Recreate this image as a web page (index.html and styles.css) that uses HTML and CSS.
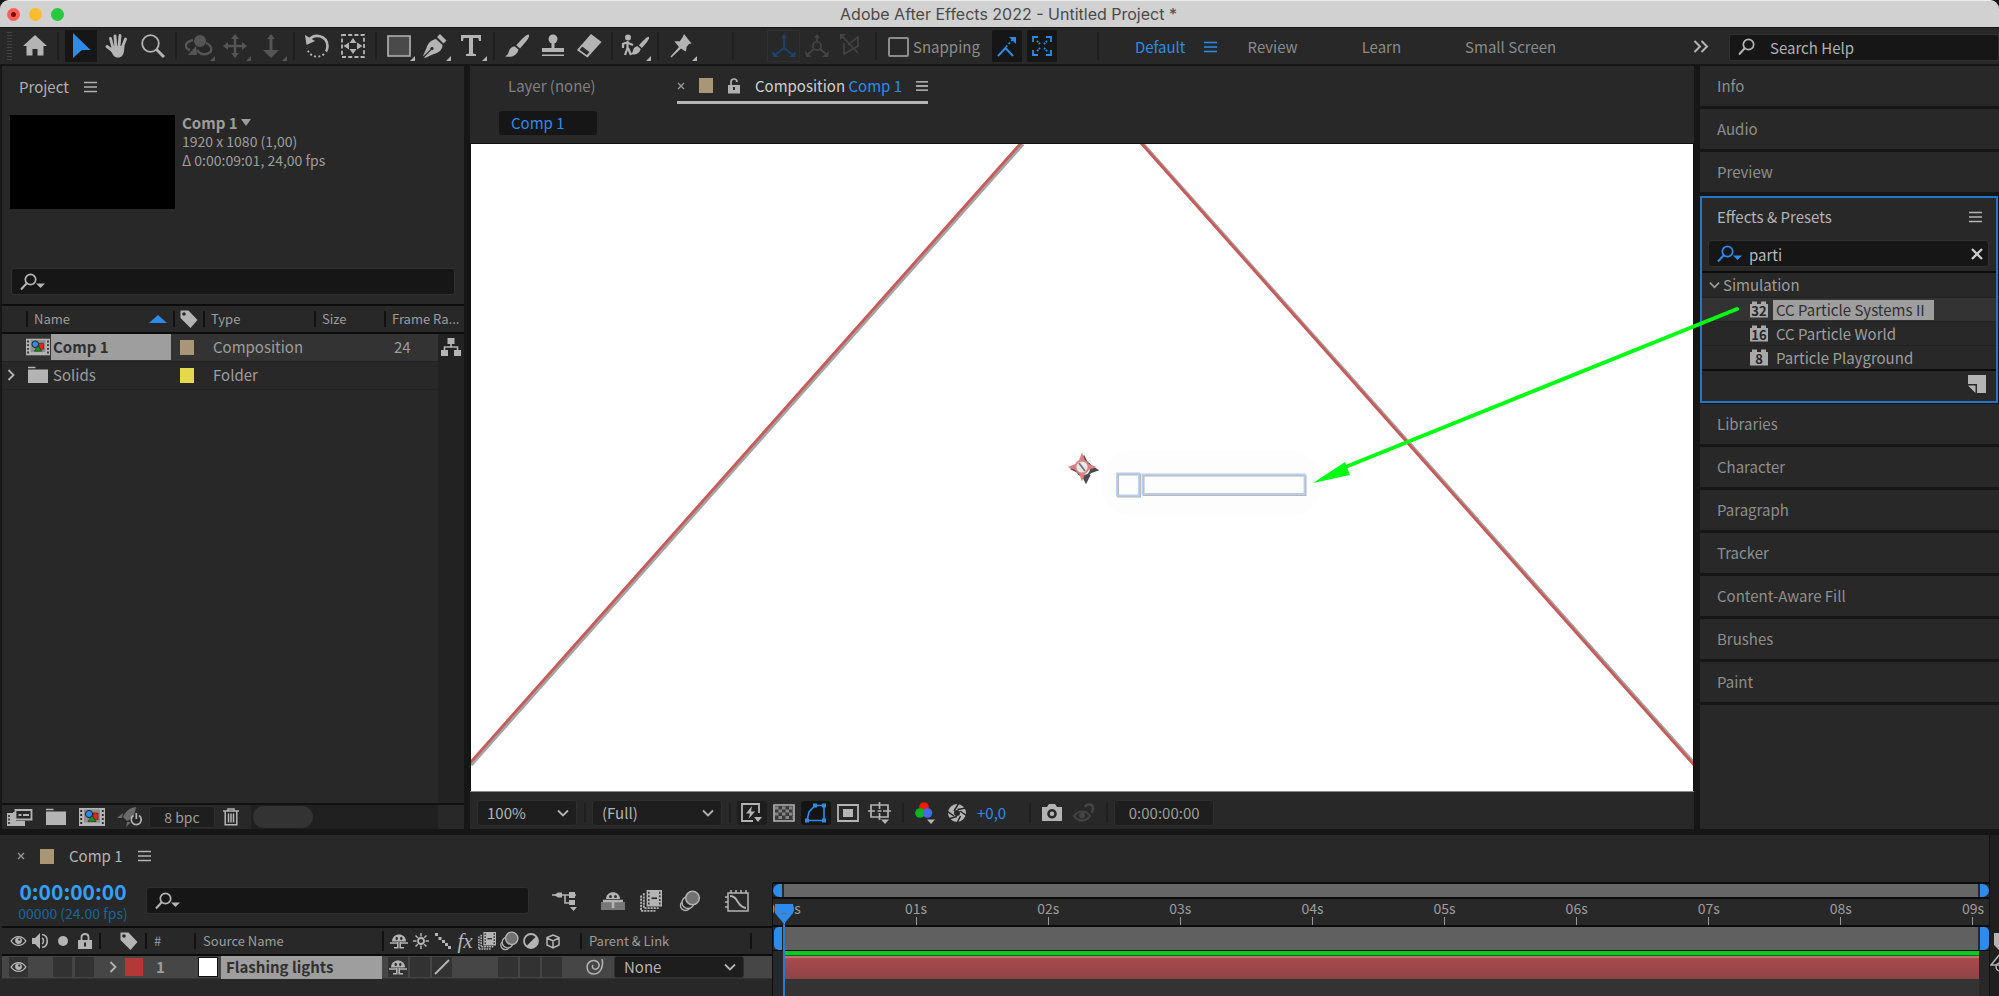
FILE: index.html
```html
<!DOCTYPE html>
<html lang="en">
<head>
<meta charset="utf-8">
<title>Adobe After Effects 2022 - Untitled Project *</title>
<link rel="stylesheet" href="styles.css">
</head>
<body>
<svg class="defs" width="0" height="0" aria-hidden="true">
  <symbol id="menu" viewBox="0 0 13 12"><path d="M0 1.500h13M0 6h13M0 10.500h13" stroke="currentColor" stroke-width="1.500"/></symbol>
  <symbol id="search" viewBox="0 0 26 18"><circle cx="10.500" cy="6.500" r="5.200" fill="none" stroke="currentColor" stroke-width="1.700"/><path d="M6.700 10.300L1 16.500" stroke="currentColor" stroke-width="2"/></symbol>
  <symbol id="search-drop" viewBox="0 0 26 18"><circle cx="10.500" cy="6.500" r="5.200" fill="none" stroke="currentColor" stroke-width="1.700"/><path d="M6.700 10.300L1 16.500" stroke="currentColor" stroke-width="2"/><path d="M16 10.500h9l-4.500 4.500z" fill="currentColor"/></symbol>
  <symbol id="chev" viewBox="0 0 12 8"><path d="M1 1.500l5 5 5-5" fill="none" stroke="currentColor" stroke-width="1.800"/></symbol>
  <symbol id="chev-r" viewBox="0 0 8 12"><path d="M1.500 1l5 5-5 5" fill="none" stroke="currentColor" stroke-width="1.800"/></symbol>
  <symbol id="corner" viewBox="0 0 5 5"><path d="M5 0v5H0z" fill="currentColor"/></symbol>
  <symbol id="tag" viewBox="0 0 20 20"><path fill-rule="evenodd" d="M1.500 1.500h8L18.500 11l-7 8L1.500 9zM5 3.200a1.800 1.800 0 100 3.600 1.800 1.800 0 000-3.600z" fill="currentColor"/></symbol>
  <symbol id="folder" viewBox="0 0 22 18"><path d="M1 1.500h7.500" stroke="currentColor" stroke-width="1.500"/><path d="M1 3.500h20V17H1z" fill="currentColor"/></symbol>
  <symbol id="comp" viewBox="0 0 26 20"><path d="M0 1h26v18H0z" fill="#b4b4b4"/><path d="M2.200 3v15M23.800 3v15" stroke="#262626" stroke-width="1.800" stroke-dasharray="2 2"/><path d="M5 2.500h16v13H5z" fill="#8e8e8e"/><circle cx="10" cy="7" r="3.600" fill="#2d8ceb" stroke="#202020"/><path d="M14 6h5v6.500h-5z" fill="#f32020" stroke="#202020" stroke-width=".6"/><path d="M13 8.500l4 6H9z" fill="#0d9a12" stroke="#202020" stroke-width=".6"/></symbol>
  <symbol id="eye" viewBox="0 0 18 14"><path d="M1.200 7C5 .8 13 .8 16.800 7 13 13.200 5 13.200 1.200 7z" fill="none" stroke="currentColor" stroke-width="1.500"/><circle cx="9" cy="6.500" r="3.600" fill="currentColor"/><circle cx="9.800" cy="5.500" r="1.200" fill="#262626"/></symbol>
  <symbol id="shy" viewBox="0 0 18 16"><path d="M2 8.500C2 -1 16 -1 16 8.500z" fill="currentColor"/><path d="M0 10h7.500M10.500 10H18M7.800 9v6.500M10.200 9v6.500M4 14.800h3.800M10.200 14.800H14" stroke="currentColor" stroke-width="1.600"/><ellipse cx="6.700" cy="5.500" rx="1.200" ry="1.800" fill="#303030"/><ellipse cx="11.300" cy="5.500" rx="1.200" ry="1.800" fill="#303030"/></symbol>
  <symbol id="blend" viewBox="0 0 20 20"><path d="M1 5v14h13M3.500 3v13.500H17" fill="none" stroke="currentColor" stroke-width="1.700" stroke-dasharray="2 .8"/><path d="M6 0h14v15H6z" fill="currentColor"/><path d="M8 1.500v12M18 1.500v12" stroke="#2b2b2b" stroke-width="1.300" stroke-dasharray="1.800 1.500"/><path d="M10.500 7.500h5" stroke="#2b2b2b" stroke-width="1.500"/></symbol>
  <symbol id="blur" viewBox="0 0 22 22"><circle cx="7" cy="15.500" r="5" fill="#262626" stroke="currentColor" stroke-width="1.400"/><circle cx="9.500" cy="12.500" r="6" fill="#262626" stroke="currentColor" stroke-width="1.400"/><circle cx="14" cy="8" r="6.800" fill="#727272" stroke="currentColor" stroke-width="1.500"/></symbol>
  <symbol id="brick" viewBox="0 0 18 16"><path d="M0 2.500h2V0h5v2.500h4V0h5v2.500h2V16H0z" fill="#a8a8a8"/></symbol>
  <symbol id="brush" viewBox="0 0 24 24"><path d="M24 .5c1 1-.5 3.500-3 7l-6 7-3.800-3.300 6-6.500C20.500 1.500 23 0 24 .5zM10 12.500l3.500 3.200c-1.500 6-7.500 8.300-13.500 6.500 3-1.200 3.500-3 4-5.200 1-3.300 3.500-4.800 6-4.500z" fill="currentColor"/></symbol>
</svg>

<header class="titlebar">
  <div class="lights"><span class="light red"></span><span class="light amber"></span><span class="light green"></span></div>
  <h1 class="window-title">Adobe After Effects 2022 - Untitled Project *</h1>
</header>

<nav class="toolbar" aria-label="Tools">
  <span class="grip"></span>
  <button class="tool" aria-label="Home"><svg width="24" height="24" viewBox="0 0 24 24"><path d="M12 1L24 12h-3.500v9.500h-6V15h-5v6.500h-6V12H0z" fill="currentColor"/></svg></button>
  <span class="sep"></span>
  <button class="tool on" aria-label="Selection"><svg width="20" height="26" viewBox="0 0 20 26"><path d="M2 0l17.500 17H11l-9 8z" fill="currentColor"/></svg></button>
  <button class="tool" aria-label="Hand"><svg width="24" height="24" viewBox="0 0 24 24"><path d="M8 14L5.500 4.500M10.700 12L10 2M14 12l1-10.500M17 14l3.500-9M8 17L2 12.500" stroke="currentColor" stroke-width="2.900" stroke-linecap="round"/><path d="M7 12h12.500l-.5 5c-.6 4-2 6.500-6 6.500S8 21 5.500 16z" fill="currentColor"/></svg></button>
  <button class="tool" aria-label="Zoom"><svg width="24" height="24" viewBox="0 0 24 24"><circle cx="9.500" cy="9.500" r="8.300" fill="none" stroke="currentColor" stroke-width="1.800"/><path d="M15.500 15.500L23 23" stroke="currentColor" stroke-width="3"/></svg></button>
  <span class="sep"></span>
  <button class="tool dim" aria-label="Orbit"><svg width="28" height="24" viewBox="0 0 28 24"><circle cx="15" cy="7" r="6" fill="currentColor"/><path d="M8 6C-1 8-1 14 5 16M21 9c7 3 7 10 0 11-4 1-7-1-9-4" fill="none" stroke="currentColor" stroke-width="2.400"/><path d="M11 12l1 9H3z" fill="currentColor"/></svg><svg class="corner"><use href="#corner"/></svg></button>
  <button class="tool dim" aria-label="Pan"><svg width="24" height="24" viewBox="0 0 24 24"><path d="M12 3v18M3 12h18" stroke="currentColor" stroke-width="2.500"/><path d="M12 0l4 5H8zM12 24l4-5H8zM0 12l5-4v8zM24 12l-5-4v8z" fill="currentColor"/></svg><svg class="corner"><use href="#corner"/></svg></button>
  <button class="tool dim" aria-label="Dolly"><svg width="18" height="24" viewBox="0 0 18 24"><path d="M9 0l4 5H5zM7.500 4h3v12H17l-8 8-8-8h6.500z" fill="currentColor"/></svg><svg class="corner"><use href="#corner"/></svg></button>
  <span class="sep"></span>
  <button class="tool" aria-label="Rotate"><svg width="26" height="26" viewBox="0 0 26 26"><path d="M5 7C10 0 23 2 23.500 13c0 2-.5 4-1.500 5.500" fill="none" stroke="currentColor" stroke-width="2.600"/><path d="M1 2l1.500 10L11 8z" fill="currentColor"/><path d="M20 21c-5 5-15 3-17-6" fill="none" stroke="currentColor" stroke-width="1.800" stroke-dasharray="2 2.300"/></svg></button>
  <button class="tool" aria-label="Pan behind"><svg width="24" height="24" viewBox="0 0 24 24"><path d="M1 1h22v22H1z" fill="none" stroke="currentColor" stroke-width="1.800" stroke-dasharray="4 2.200"/><path d="M12 4l3.500 5h-7zM12 20l3.500-5h-7zM2.500 12L8 8.500v7zM21.500 12L16 8.500v7z" fill="currentColor"/></svg></button>
  <span class="sep"></span>
  <button class="tool" aria-label="Rectangle"><svg width="24" height="22" viewBox="0 0 24 22"><path d="M1 1h22v20H1z" fill="#4a4a4a" stroke="currentColor" stroke-width="1.600"/></svg><svg class="corner"><use href="#corner"/></svg></button>
  <button class="tool" aria-label="Pen"><svg width="24" height="24" viewBox="0 0 24 24"><path d="M17 0l6.500 6.500-3 3L14 3zM13 5l6.500 6c0 6-5 8-10 9.500L2 24l-.7-.7 7-7.300c2 .8 3.200-1.700 1.500-2.700-1.300-.8-3 .5-2.300 2L.3 22.300 0 22 3.500 14C5 9 8 6 13 5z" fill="currentColor"/></svg><svg class="corner"><use href="#corner"/></svg></button>
  <button class="tool" aria-label="Type"><svg width="20" height="22" viewBox="0 0 20 22"><path d="M0 0h20v6h-2l-.6-3H12v15.500l3 .7V21H5v-1.800l3-.7V3H2.600L2 6H0z" fill="currentColor"/></svg><svg class="corner"><use href="#corner"/></svg></button>
  <span class="sep"></span>
  <button class="tool" aria-label="Brush"><svg width="24" height="24"><use href="#brush"/></svg></button>
  <button class="tool" aria-label="Clone stamp"><svg width="24" height="24" viewBox="0 0 24 24"><circle cx="12" cy="5" r="4.500" fill="currentColor"/><path d="M10.500 8h3v6H23v4H1v-4h9.500zM1 20.500h22V22H1z" fill="currentColor"/></svg></button>
  <button class="tool" aria-label="Eraser"><svg width="26" height="24" viewBox="0 0 26 24"><path d="M15 0l10.500 8L11.500 23.500 1 16z" fill="currentColor"/><path d="M6 11.500l8.500 6.500-3.500 4-8.500-6z" fill="#2b2b2b" stroke="currentColor" stroke-width="1.500"/></svg></button>
  <span class="sep"></span>
  <button class="tool" aria-label="Roto brush"><svg width="28" height="24" viewBox="0 0 28 24"><circle cx="7" cy="3.500" r="3" fill="currentColor"/><path d="M6.500 7v8M6.500 8L2 10v4M7 9l5 2M6.500 14L4 21M7 14l3 7" fill="none" stroke="currentColor" stroke-width="2.200"/><svg x="9" y="2" width="19" height="20"><use href="#brush"/></svg></svg><svg class="corner"><use href="#corner"/></svg></button>
  <span class="sep"></span>
  <button class="tool" aria-label="Puppet pin"><svg width="22" height="24" viewBox="0 0 22 24"><path d="M14 0l7.500 9.500-2.500.5-2.500 3c0 2-.3 3.500-1 4.500L11 14.500 1.500 23.500l-1-1L9 13 4.500 7.500C6 7 8 7 9.500 7.500l3-4z" fill="currentColor"/></svg><svg class="corner"><use href="#corner"/></svg></button>
  <span class="sep far"></span>
  <button class="tool axis blue" aria-label="Local axis"><svg width="24" height="24" viewBox="0 0 24 24"><path d="M12 3v11L3 21M12 14l9 7" fill="none" stroke="currentColor" stroke-width="1.800"/><path d="M12 0l3 4H9zM0 17l1 6h6zM24 17l-1 6h-6z" fill="currentColor"/></svg></button>
  <button class="tool axis" aria-label="World axis"><svg width="24" height="24" viewBox="0 0 24 24"><circle cx="12" cy="12" r="4.200" fill="none" stroke="currentColor" stroke-width="1.800"/><path d="M12 2v6M9 15l-6 5M15 15l6 5" stroke="currentColor" stroke-width="1.800"/><path d="M12 0l3 4H9zM0 17l1 6h6zM24 17l-1 6h-6z" fill="currentColor"/></svg></button>
  <button class="tool axis" aria-label="View axis"><svg width="20" height="24" viewBox="0 0 20 24"><path d="M2 2l16 17M4 9v11L18 12V3L8 11" fill="none" stroke="currentColor" stroke-width="1.600"/><path d="M0 0h6L0 6z" fill="currentColor"/></svg></button>
  <span class="sep"></span>
  <label class="snapping"><input type="checkbox">Snapping</label>
  <button class="tool snap" aria-label="Snap edges"><svg width="22" height="22" viewBox="0 0 22 22"><path d="M2 21l7.500-8 7.500 8" fill="none" stroke="currentColor" stroke-width="2"/><path d="M10 12l8-9" stroke="currentColor" stroke-width="1.800" stroke-dasharray="2 2"/><path d="M13 2h7v7z" fill="currentColor"/></svg></button>
  <button class="tool snap" aria-label="Snap corners"><svg width="20" height="20" viewBox="0 0 20 20"><path d="M1 6V1h5M14 1h5v5M1 14v5h5M19 14v5h-5" fill="none" stroke="currentColor" stroke-width="1.800"/><path d="M5 5l3 3M15 5l-3 3M5 15l3-3M15 15l-3-3" stroke="currentColor" stroke-width="2" stroke-dasharray="1.600 1"/></svg></button>
  <span class="sep ws-edge"></span>
  <div class="workspaces">
    <a href="#default" class="current">Default<svg width="13" height="12"><use href="#menu"/></svg></a>
    <a href="#review">Review</a>
    <a href="#learn">Learn</a>
    <a href="#small">Small Screen</a>
  </div>
  <button class="more" aria-label="More workspaces"><svg width="16" height="13" viewBox="0 0 16 13"><path d="M1.500 1L7 6.500 1.500 12M8.500 1L14 6.500 8.500 12" fill="none" stroke="currentColor" stroke-width="2"/></svg></button>
  <label class="field help"><svg width="26" height="18"><use href="#search"/></svg><input type="text" aria-label="Search Help" placeholder="Search Help"></label>
</nav>

<main class="workspace">
  <section class="panel project">
    <div class="panel-tab">Project<svg width="13" height="12"><use href="#menu"/></svg></div>
    <div class="preview">
      <div class="thumb"></div>
      <div class="meta"><strong>Comp 1<svg width="10" height="7" viewBox="0 0 10 7"><path d="M0 0h10L5 7z" fill="currentColor"/></svg></strong><span>1920 x 1080 (1,00)</span><span>Δ 0:00:09:01, 24,00 fps</span></div>
    </div>
    <label class="field project-search"><svg width="26" height="18"><use href="#search-drop"/></svg><input type="text" aria-label="Search project"></label>
    <div class="assets">
      <table>
        <colgroup><col class="c-pad"><col class="c-name"><col class="c-tag"><col class="c-type"><col class="c-size"><col class="c-rate"><col></colgroup>
        <thead><tr><th></th><th><span class="split">Name<svg width="18" height="8" viewBox="0 0 18 8"><path d="M9 0l9 8H0z" fill="#2d8ceb"/></svg></span></th><th><svg width="20" height="20"><use href="#tag"/></svg></th><th>Type</th><th>Size</th><th>Frame Ra...</th><th></th></tr></thead>
        <tbody>
          <tr class="picked"><td></td><td class="asset"><span><svg width="24" height="20"><use href="#comp"/></svg><b>Comp 1</b></span></td><td><i class="swatch tan"></i></td><td>Composition</td><td></td><td>24</td><td class="flow"><svg width="20" height="18" viewBox="0 0 20 18"><path d="M6.500 0h7v6h-7zM0 12h7v6H0zM13 12h7v6h-7z" fill="currentColor"/><path d="M10 6v3M3.500 12V9h13v3" fill="none" stroke="currentColor" stroke-width="1.600"/></svg></td></tr>
          <tr><td class="twirl"><svg width="8" height="12"><use href="#chev-r"/></svg></td><td class="asset"><span><svg width="24" height="18"><use href="#folder"/></svg><em>Solids</em></span></td><td><i class="swatch yellow"></i></td><td>Folder</td><td></td><td></td><td class="flow"></td></tr>
        </tbody>
      </table>
      <div class="assets-rest"></div>
    </div>
    <div class="project-foot">
      <button aria-label="Interpret footage"><svg width="26" height="18" viewBox="0 0 26 18"><path d="M0 5v13h18v-5H9V4H6v1z" fill="currentColor"/><path d="M2 7v10" stroke="#262626" stroke-width="1.500" stroke-dasharray="2 1.500"/><path d="M8.500 2h16v9.500h-16z" fill="#262626" stroke="currentColor" stroke-width="1.800"/><path d="M11.500 7h3M16 7h6" stroke="currentColor" stroke-width="2"/></svg></button>
      <button aria-label="New folder"><svg width="22" height="18"><use href="#folder"/></svg></button>
      <button aria-label="New composition"><svg width="26" height="20"><use href="#comp"/></svg></button>
      <button aria-label="GPU"><svg width="26" height="20" viewBox="0 0 26 20"><path d="M19 0C12 1 8 5 6 10l4 4c5-2 8-6 9-14zM6 6L0 11h5zM10 15l-1 5 5-5z" fill="#6a6a6a"/><path d="M16.500 8.500a5 5 0 105.500 0M19.300 6v6" fill="none" stroke="currentColor" stroke-width="1.700"/></svg></button>
      <button class="bpc">8 bpc</button>
      <button aria-label="Delete"><svg width="16" height="18" viewBox="0 0 16 18"><path d="M0 3h16M5 3V1h6v2M2.200 3v13.800h11.600V3M5.500 5.500v9M8 5.500v9M10.500 5.500v9" fill="none" stroke="currentColor" stroke-width="1.500"/></svg></button>
      <div class="hscroll"><span></span></div>
    </div>
  </section>

  <section class="panel viewer">
    <div class="viewer-tabs">
      <span class="quiet">Layer (none)</span>
      <div class="active-tab"><svg width="8" height="8" viewBox="0 0 8 8"><path d="M1 1l6 6M7 1L1 7" stroke="#999" stroke-width="1.300"/></svg><i class="swatch tan"></i><svg width="14" height="16" viewBox="0 0 14 16"><path d="M1 7h12v8.500H1zM6 9v3h2V9z" fill="#b0b0b0" fill-rule="evenodd"/><path d="M4 7V4c0-4 6-4 6 0" fill="none" stroke="#b0b0b0" stroke-width="1.700"/></svg><span>Composition <a href="#comp1">Comp 1</a></span><svg width="12" height="12"><use href="#menu"/></svg></div>
    </div>
    <div class="crumbs"><button>Comp 1</button></div>
    <div class="canvas">
      <svg viewBox="0 0 1222 647" preserveAspectRatio="xMidYMid slice" aria-hidden="true">
        <path d="M552 0L0 621M671 -1L1223 619" stroke="#666" stroke-opacity=".6" stroke-width="3.500"/>
        <path d="M550 -1L-2 620M670 -1L1223 621" stroke="#c85a5a" stroke-width="2.800"/>
        <g stroke="#4a4a4a" fill="#4a4a4a" stroke-width="2"><circle cx="613" cy="325" r="7" fill="none"/><path d="M613 313l-2.500 5h5zM615 338l-3-6h6zM601 325l5-2.500v5zM626 326l-6-4v6z"/></g>
        <g stroke="#d98080" fill="#d98080" stroke-width="1.800"><circle cx="611" cy="323" r="6.500" fill="#e8e8e8"/><path d="M611 311l-2 5h4zM611 335l-2-5h4zM599 323l5-2v4zM623 323l-5-2v4z"/></g>
        <path d="M608 319l6 8" stroke="#777" stroke-width="1.800"/>
        <rect x="630" y="307" width="220" height="65" rx="30" fill="#fdfdfd"/>
        <g fill="none"><path d="M647 330.500h22v22h-22zM672.500 331.500h162v19.500h-162z" stroke="#b8b8bb" stroke-width="2"/><path d="M646 329.500h22v22h-22zM671.500 330.500h162v19.500h-162z" stroke="#b8cdea" stroke-width="1.800"/></g>
      </svg>
    </div>
    <div class="viewer-foot">
      <label class="pick zoom"><select aria-label="Magnification"><option>100%</option></select><svg width="12" height="8"><use href="#chev"/></svg></label>
      <span class="sep"></span>
      <label class="pick res"><select aria-label="Resolution"><option>(Full)</option></select><svg width="12" height="8"><use href="#chev"/></svg></label>
      <span class="sep"></span>
      <button class="dark" aria-label="Fast previews"><svg width="24" height="22" viewBox="0 0 24 22"><path d="M19 11V2H2v17h11" fill="none" stroke="currentColor" stroke-width="1.800"/><path d="M12 4l-6 7.500h4L8.500 17 15 9.500h-4z" fill="currentColor"/><path d="M14 15h8l-4 5z" fill="currentColor"/></svg></button>
      <button aria-label="Transparency grid"><svg width="22" height="18" viewBox="0 0 22 18"><path d="M1 1h20v16H1z" fill="#3a3a3a" stroke="currentColor" stroke-width="1.600"/><path d="M2 4h18M2 10h18" stroke="#858585" stroke-width="3" stroke-dasharray="3.500 3.500"/><path d="M5.500 7H20M5.500 13.500H20" stroke="#858585" stroke-width="3" stroke-dasharray="3.500 3.500"/></svg></button>
      <button class="mask" aria-label="Mask visibility"><svg width="22" height="20" viewBox="0 0 22 20"><path d="M2 17.500L4 9l6-6.500h9v15z" fill="none" stroke="currentColor" stroke-width="1.600"/><path d="M0 15.500h4v4H0zM17 15.500h4v4h-4zM17 .5h4v4h-4zM8 .5h4v4H8z" fill="currentColor"/></svg></button>
      <button aria-label="Region of interest"><svg width="22" height="18" viewBox="0 0 22 18"><path d="M1 1h20v16H1z" fill="none" stroke="currentColor" stroke-width="1.800"/><path d="M6 5h10v8H6z" fill="currentColor"/></svg></button>
      <button aria-label="Grid and guides"><svg width="24" height="22" viewBox="0 0 24 22"><path d="M3 3h17v12H3zM11.500 0v7M11.500 11v7M0 9h7M15 9h8M9.500 9h4" fill="none" stroke="currentColor" stroke-width="1.700"/><path d="M13 17.500h8L17 22z" fill="currentColor"/></svg></button>
      <span class="sep"></span>
      <button aria-label="Channels"><svg width="20" height="22" viewBox="0 0 20 22"><circle cx="9" cy="5" r="4.800" fill="#f21b0c"/><circle cx="5" cy="11" r="4.800" fill="#0bb51a"/><circle cx="12.500" cy="11" r="4.800" fill="#3d6cf0"/><path d="M12 17.500h8L16 22z" fill="currentColor"/></svg></button>
      <button aria-label="Exposure"><svg width="20" height="20" viewBox="0 0 20 20"><circle cx="10" cy="10" r="6" fill="none" stroke="currentColor" stroke-width="6"/><path d="M12 0L7 8M19 5L10.500 6.500M20 13l-7-5M10 20l3.500-7M1 16l9-2.500M0 8l7 5" stroke="#262626" stroke-width="1.500"/></svg></button>
      <a href="#exposure">+0,0</a>
      <span class="sep"></span>
      <button aria-label="Snapshot"><svg width="22" height="18" viewBox="0 0 22 18"><path fill-rule="evenodd" d="M1 3h5l2-3h6l2 3h5v14H1zM11 5a4.800 4.800 0 100 9.600A4.800 4.800 0 0011 5zm0 2.500a2.300 2.300 0 110 4.600 2.300 2.300 0 010-4.600z" fill="currentColor"/></svg></button>
      <button class="faint" aria-label="Show snapshot"><svg width="22" height="20" viewBox="0 0 22 20"><path d="M1 13c4-6 12-6 16 0-4 6-12 6-16 0z" fill="none" stroke="currentColor" stroke-width="2"/><circle cx="9" cy="12.500" r="3" fill="currentColor"/><path d="M12 4c2-4 8-3 8 1s-2 4-2 4" fill="none" stroke="currentColor" stroke-width="2.500"/></svg></button>
      <span class="sep"></span>
      <button class="timebox">0:00:00:00</button>
    </div>
  </section>

  <aside class="side">
    <button class="side-tab">Info</button>
    <button class="side-tab">Audio</button>
    <button class="side-tab">Preview</button>
    <section class="effects">
      <h2>Effects &amp; Presets<svg width="13" height="12"><use href="#menu"/></svg></h2>
      <label class="field fx-search"><svg width="26" height="18"><use href="#search-drop"/></svg><input type="text" aria-label="Search effects" value="parti"><svg width="12" height="12" viewBox="0 0 12 12"><path d="M1 1l10 10M11 1L1 11" stroke="#ccc" stroke-width="2.300"/></svg></label>
      <div class="fx-group"><svg width="11" height="8"><use href="#chev"/></svg>Simulation</div>
      <ul>
        <li class="picked"><span class="brick"><svg width="18" height="17"><use href="#brick"/></svg><b>32</b></span><span class="fx">CC Particle Systems II</span></li>
        <li><span class="brick"><svg width="18" height="17"><use href="#brick"/></svg><b>16</b></span><span class="fx">CC Particle World</span></li>
        <li><span class="brick"><svg width="18" height="17"><use href="#brick"/></svg><b>8</b></span><span class="fx">Particle Playground</span></li>
      </ul>
      <div class="fx-foot"><svg width="18" height="18" viewBox="0 0 18 18"><path d="M0 0h18v18H9V9H0z" fill="#b4b4b4"/><path d="M0 10.500h7.500V18z" fill="#b4b4b4"/></svg></div>
    </section>
    <button class="side-tab">Libraries</button>
    <button class="side-tab">Character</button>
    <button class="side-tab">Paragraph</button>
    <button class="side-tab">Tracker</button>
    <button class="side-tab">Content-Aware Fill</button>
    <button class="side-tab">Brushes</button>
    <button class="side-tab">Paint</button>
    <div class="side-rest"></div>
  </aside>

  <svg class="drag-arrow" width="430" height="184" viewBox="0 0 430 184" aria-hidden="true"><path d="M424 6L30 165" stroke="#00ff12" stroke-width="4" stroke-linecap="round"/><path d="M0 180L32 159l5 13z" fill="#00ff12"/></svg>
</main>

<section class="timeline">
  <div class="layers">
    <div class="tl-tab"><svg width="8" height="8" viewBox="0 0 8 8"><path d="M1 1l6 6M7 1L1 7" stroke="#999" stroke-width="1.300"/></svg><i class="swatch tan"></i><span>Comp 1</span><svg width="13" height="12"><use href="#menu"/></svg></div>
    <div class="tl-controls">
      <div class="clock"><b>0:00:00:00</b><span>00000 (24.00 fps)</span></div>
      <label class="field tl-search"><svg width="26" height="18"><use href="#search-drop"/></svg><input type="text" aria-label="Search layers"></label>
      <button aria-label="Flowchart"><svg width="26" height="22" viewBox="0 0 26 22"><path d="M0 5h4M8 5h16M13 5v8h8" fill="none" stroke="currentColor" stroke-width="1.600"/><path d="M2 5l4-2.500h4v5H6zM17 2h6v6h-6zM17 10h6v5h-6zM18 17h7l-3.500 4z" fill="currentColor"/></svg></button>
      <button aria-label="Shy layers"><svg width="24" height="20" viewBox="0 0 24 20"><path d="M0 11h24v8H0z" fill="#777"/><path d="M5 8C5-1 19-1 19 8z" fill="currentColor"/><path d="M2 10h20M12 9v8" stroke="currentColor" stroke-width="2.600"/><circle cx="9.500" cy="5.500" r="1.500" fill="#333"/><circle cx="14.500" cy="5.500" r="1.500" fill="#333"/></svg></button>
      <button aria-label="Frame blending"><svg width="22" height="22"><use href="#blend"/></svg></button>
      <button aria-label="Motion blur"><svg width="23" height="22"><use href="#blur"/></svg></button>
      <button aria-label="Graph editor"><svg width="24" height="22" viewBox="0 0 24 22"><path d="M3 3h20v18H3zM6 0v3M11 0v3M16 0v3M21 0v3M0 7h3M0 12h3M0 17h3" fill="none" stroke="currentColor" stroke-width="1.500"/><path d="M5 6c9 0 6 11 16 12" fill="none" stroke="currentColor" stroke-width="1.800"/></svg></button>
    </div>
    <div class="tl-head">
      <span class="w18"><svg width="17" height="14"><use href="#eye"/></svg></span>
      <span class="w18"><svg width="18" height="16" viewBox="0 0 18 16"><path d="M0 5h3l5-5v16l-5-5H0z" fill="currentColor"/><path d="M10 5c2 1 2 5 0 6M10 1.500c7 1 7 12 0 13" fill="none" stroke="currentColor" stroke-width="1.600"/></svg></span>
      <span class="w18"><svg width="10" height="10" viewBox="0 0 10 10"><circle cx="5" cy="5" r="5" fill="currentColor"/></svg></span>
      <span class="w18"><svg width="14" height="16" viewBox="0 0 14 16"><path d="M0 7h14v9H0zM6 9.500v4h2v-4z" fill="currentColor" fill-rule="evenodd"/><path d="M3.500 7V4c0-4 7-4 7 0v3" fill="none" stroke="currentColor" stroke-width="1.800"/></svg></span>
      <span class="h-tag"><svg width="20" height="20"><use href="#tag"/></svg></span>
      <span class="h-num">#</span>
      <span class="h-name">Source Name</span>
      <span class="switches">
        <span><svg width="18" height="16"><use href="#shy"/></svg></span>
        <span><svg width="16" height="16" viewBox="0 0 16 16"><circle cx="8" cy="8" r="3" fill="none" stroke="currentColor" stroke-width="1.800"/><path d="M8 0v3.500M8 12.500V16M0 8h3.500M12.500 8H16M2.500 2.500l2.300 2.300M11.200 11.200l2.300 2.300M13.500 2.500l-2.300 2.300M4.800 11.200l-2.300 2.300" stroke="currentColor" stroke-width="1.500"/></svg></span>
        <span><svg width="16" height="16" viewBox="0 0 16 16"><path d="M0 0h3v3H0zM3.500 4h3v3h-3zM7 7h3v3H7zM10 10h3v3h-3zM13 13h3v3h-3z" fill="currentColor"/></svg></span>
        <span class="fxi">fx</span>
        <span><svg width="18" height="18"><use href="#blend"/></svg></span>
        <span><svg width="20" height="20"><use href="#blur"/></svg></span>
        <span><svg width="16" height="16" viewBox="0 0 16 16"><circle cx="8" cy="8" r="7" fill="none" stroke="currentColor" stroke-width="1.800"/><path d="M13.500 3L3 13.500A7.500 7.500 0 0013.500 3z" fill="currentColor"/></svg></span>
        <span><svg width="14" height="15" viewBox="0 0 14 15"><path d="M7 1l6 2.500v7.500l-6 3-6-3V3.500zM1 4l6 3 6-3M7 7v7" fill="none" stroke="currentColor" stroke-width="1.500"/></svg></span>
      </span>
      <span class="h-parent">Parent &amp; Link</span>
    </div>
    <div class="tl-row">
      <span class="w18 cell"><svg width="17" height="14"><use href="#eye"/></svg></span>
      <span class="w18"></span>
      <span class="w18 cell"></span>
      <span class="w18 cell"></span>
      <span class="r-twirl"><svg width="8" height="12"><use href="#chev-r"/></svg></span>
      <i class="label-red"></i>
      <b class="r-num">1</b>
      <i class="solid"></i>
      <b class="r-name">Flashing lights</b>
      <span class="switches">
        <span class="cell"><svg width="18" height="16"><use href="#shy"/></svg></span>
        <span class="cell"></span>
        <span class="cell"><svg width="16" height="16" viewBox="0 0 16 16"><path d="M1 15L15 1" stroke="currentColor" stroke-width="2"/></svg></span>
        <span></span><span></span>
        <span class="cell"></span><span class="cell"></span><span class="cell"></span>
      </span>
      <span class="whip"><svg width="18" height="16" viewBox="0 0 18 16"><path d="M16 0c2 8-2 15-8 15-8 0-9-10-3-13 6-2 10 3 7 7-3 3-7 0-5-3" fill="none" stroke="currentColor" stroke-width="1.500"/></svg></span>
      <label class="pick parent"><select aria-label="Parent"><option>None</option></select><svg width="12" height="8"><use href="#chev"/></svg></label>
    </div>
  </div>

  <div class="time">
    <div class="navigator"><i class="cap left"></i><i class="span"></i><i class="cap right"></i></div>
    <div class="ruler"><span>0:00s</span><span>01s</span><span>02s</span><span>03s</span><span>04s</span><span>05s</span><span>06s</span><span>07s</span><span>08s</span><span>09s</span></div>
    <div class="workarea"><i class="cap left"></i><i class="span"></i><i class="cap right"></i></div>
    <div class="cached"></div>
    <div class="clip"></div>
    <div class="empty"></div>
    <div class="playhead"><svg width="18" height="20" viewBox="0 0 18 20"><path d="M0 0h18v9l-9 11L0 9z" fill="#2d8ceb"/><path d="M6 10h6" stroke="#666"/></svg><i></i></div>
  </div>
  <div class="edge"><svg width="10" height="18" viewBox="0 0 10 18"><path d="M4 0h6v18L4 12z" fill="#b4b4b4"/></svg><svg width="10" height="22" viewBox="0 0 10 22"><path d="M10 3L1 14h9" fill="none" stroke="#b4b4b4" stroke-width="1.500"/><circle cx="10" cy="16" r="4" fill="none" stroke="#b4b4b4" stroke-width="1.500"/></svg></div>
</section>
</body>
</html>
```
FILE: styles.css
```css
:root {
  --bg: #282828;
  --gap: #161616;
  --text: #9d9d9d;
  --bright: #c4c4c4;
  --icon: #b4b4b4;
  --blue: #2d8ceb;
}
* { box-sizing: border-box; }
body {
  margin: 0;
  min-height: 100vh;
  display: flex;
  flex-direction: column;
  background: var(--gap);
  color: var(--text);
  font: 15px/20px "Noto Sans CJK SC", "Noto Sans", sans-serif;
  overflow: hidden;
}
.defs { position: absolute; }
svg { flex: none; display: block; }
button, input, select { font: inherit; color: inherit; background: none; border: 0; margin: 0; padding: 0; }
h1, h2, ul { margin: 0; padding: 0; font: inherit; list-style: none; }
a { color: var(--blue); text-decoration: none; }
i, em { font-style: normal; }
input { min-width: 0; outline: none; }
button { display: flex; align-items: center; justify-content: center; }

.titlebar { display: grid; grid-template-columns: 1fr auto 1fr; align-items: center; height: 27px; background: #d1d1d1; border-top: 1px solid #ececec; border-radius: 9px 9px 0 0; }
.lights { display: flex; gap: 9px; padding-left: 7px; }
.light { width: 13px; height: 13px; border-radius: 50%; }
.red { background: radial-gradient(circle, #7a0a05 2px, #ff5f57 3px); }
.amber { background: #febc2e; }
.green { background: #28c840; }
.window-title { grid-column: 2; color: #4a4a4a; font: 16px/20px Inter, Roboto, sans-serif; padding-left: 18px; }

.toolbar { display: flex; align-items: center; height: 36px; margin-top: 1px; background: var(--bg); color: var(--icon); }
.grip { width: 5px; height: 28px; margin: 0 5px 0 7px; background: repeating-linear-gradient(#444 0 1px, #282828 1px 3px); }
.sep { flex: none; width: 10px; height: 28px; background: linear-gradient(#1f1f1f, #1f1f1f) center / 2px 100% no-repeat; }
.tool { position: relative; flex: none; width: 36px; height: 32px; }
.tool.on { background: #161616; background-clip: padding-box; border: 0 solid transparent; border-width: 0 2px; color: var(--blue); }
.dim { color: #555; }
.corner { position: absolute; right: 2px; bottom: 1px; width: 5px; height: 5px; }
.far { width: 68px; }
.tool.axis { width: 33px; color: #444; }
.tool.axis.blue { color: #1d446d; border: 1px solid #303030; }
.axis + .sep { width: 20px; }
.snapping { display: flex; align-items: center; gap: 4px; margin: 0 12px 0 2px; color: #8e8e8e; padding-top: 2px; }
.snapping input { appearance: none; width: 21px; height: 20px; border: 2px solid #8c8c8c; border-radius: 2px; }
.tool.snap { width: 30px; background: #161616; color: var(--blue); margin-right: 5px; border-radius: 2px; }
.ws-edge { width: 73px; }
.workspaces { display: flex; flex: 1; gap: 64px; color: #8a8a8a; padding-top: 2px; }
.workspaces a { display: flex; align-items: center; color: inherit; white-space: nowrap; }
.workspaces .current { color: var(--blue); gap: 18px; margin-right: -33px; }
.more { margin-right: 20px; }
.field { display: flex; align-items: center; background: #161616; border: 1px solid #303030; border-radius: 3px; color: var(--icon); height: 27px; padding: 0 8px; }
.field input { flex: 1; padding-left: 6px; }
.help { width: 270px; margin-top: 2px; }
.help input { padding-top: 2px; }
.help input::placeholder { color: #b0b0b0; opacity: 1; }

.workspace { position: relative; flex: 1; display: grid; grid-template-columns: 462px minmax(0, 1fr) 299px; gap: 6px; padding: 2px 0 0 2px; min-height: 0; }
.panel { display: flex; flex-direction: column; background: var(--bg); min-width: 0; }
.panel-tab { display: flex; align-items: center; gap: 15px; height: 42px; padding-left: 17px; color: #b0b0b0; }
.preview { display: flex; gap: 7px; padding: 7px 8px 0; height: 160px; }
.thumb { width: 165px; height: 94px; background: #000; }
.meta { display: flex; flex-direction: column; font-size: 14px; line-height: 19px; margin-top: -2px; }
.meta strong { display: flex; align-items: center; gap: 3px; font-size: 15px; font-weight: 700; }
.project-search { margin: 0 9px 0 9px; }
.assets { flex: 1; display: flex; flex-direction: column; margin-top: 9px; }
table { width: 100%; border-collapse: collapse; table-layout: fixed; border-top: 2px solid #0c0c0c; }
.c-pad { width: 24px; }
.c-name { width: 147px; }
.c-tag { width: 30px; }
.c-type { width: 111px; }
.c-size { width: 70px; }
.c-rate { width: 54px; }
th { height: 28px; padding: 0 0 0 8px; text-align: left; font-size: 13px; font-weight: 400; white-space: nowrap; background: linear-gradient(#111, #111) left center / 2px 16px no-repeat; overflow: visible; }
th:first-child, th:last-child { background: none; }
th svg { color: var(--icon); }
th:nth-child(3) { padding-left: 6px; }
thead { border-bottom: 2px solid #0c0c0c; }
.split { display: flex; align-items: center; justify-content: space-between; padding-right: 6px; }
td { height: 28px; padding: 0 0 0 10px; border-bottom: 1px solid #222; }
.picked td { background: #333; }
td:nth-child(3) { padding-left: 7px; }
td.twirl { padding-left: 5px; color: var(--icon); }
td.asset { padding: 0; }
.asset span { display: flex; align-items: center; height: 26px; gap: 1px; color: var(--icon); }
.asset b { flex: 1; margin-right: 2px; line-height: 26px; padding-left: 2px; background: #9e9e9e; color: #303030; font-weight: 700; }
.asset em { padding-left: 2px; color: var(--text); }
td.flow, .picked td.flow { background: #222; padding-left: 3px; color: var(--icon); }
.swatch { display: block; flex: none; width: 14px; height: 15px; }
.tan { background: #a99676; }
.yellow { background: #e4d84d; }
.assets-rest { flex: 1; background: linear-gradient(#222, #222) right / 26px 100% no-repeat; }
.project-foot { display: flex; align-items: center; gap: 12px; height: 26px; padding: 0 26px 0 5px; border-top: 2px solid #101010; color: var(--icon); }
.bpc, .timebox { background: #1e1e1e; border: 1px solid #2e2e2e; border-radius: 3px; color: var(--text); }
.bpc { width: 66px; height: 22px; margin: 0 -4px 0 -6px; font-size: 14px; }
.hscroll { flex: 1; height: 24px; background: #202020; padding: 1px 2px; }
.hscroll span { display: block; width: 60px; height: 22px; border-radius: 11px; background: #333; }

.viewer-tabs { display: flex; align-items: flex-end; height: 38px; padding-left: 38px; }
.quiet { width: 169px; height: 28px; color: #808080; }
.active-tab { display: flex; align-items: center; gap: 14px; height: 32px; padding-bottom: 2px; border-bottom: 3px solid #b4b4b4; color: #d0d0d0; }
.crumbs { padding: 7px 0 0 29px; height: 39px; }
.crumbs button { width: 98px; height: 24px; justify-content: flex-start; padding-left: 12px; background: #161616; border-radius: 2px; color: var(--blue); }
.canvas { flex: 1; min-height: 0; border: solid #111; border-width: 1px 1px 0; background: #fff; display: flex; }
.canvas svg { flex: 1; width: 100%; height: 100%; min-width: 0; }
.viewer-foot { display: flex; align-items: center; height: 38px; padding: 5px 0 0 7px; border-top: 1px solid #888; color: var(--icon); gap: 2px; }
.viewer-foot .sep { width: 11px; height: 20px; }
.viewer-foot button { width: 30px; height: 24px; }
.viewer-foot .dark, .viewer-foot .mask { background: #1e1e1e; border-radius: 3px; }
.viewer-foot .mask { background: #141414; color: var(--blue); }
.viewer-foot a { padding: 0 16px 0 3px; }
.viewer-foot .faint { color: #444; }
.viewer-foot .timebox { width: 100px; height: 26px; font-size: 15px; }
.pick { display: flex; align-items: center; height: 26px; background: #1e1e1e; border: 1px solid #2e2e2e; border-radius: 3px; color: var(--icon); padding-right: 7px; }
.pick select { appearance: none; flex: 1; padding-left: 9px; outline: none; min-width: 0; }
.zoom { width: 100px; }
.res { width: 130px; }

.side { display: flex; flex-direction: column; gap: 3px; min-width: 0; }
.side-tab { height: 40px; flex: none; justify-content: flex-start; padding-left: 17px; background: var(--bg); color: #8e8e8e; }
.side-rest { flex: 1; background: var(--bg); }
.effects { height: 207px; display: flex; flex-direction: column; margin: 1px 1px -2px 0; border: 2px solid #2476c8; background: var(--bg); }
.effects h2 { display: flex; align-items: center; justify-content: space-between; height: 42px; padding: 0 14px 4px 15px; color: #b4b4b4; }
.fx-search { margin: 0 7px 4px 6px; padding-right: 5px; color: var(--blue); }
.fx-search input { color: #b8b8b8; padding: 2px 0 0 6px; }
.fx-group { display: flex; align-items: center; gap: 3px; height: 26px; padding-left: 7px; border-top: 2px solid #0c0c0c; }
.effects li { display: flex; align-items: center; gap: 5px; height: 24px; padding-left: 48px; border-top: 1px solid #222; }
.effects li.picked { background: #333; }
.brick { display: grid; place-items: center; color: #262626; }
.brick > * { grid-area: 1 / 1; }
.brick b { font-size: 13px; line-height: 14px; padding-top: 3px; }
.fx { padding: 0 9px 0 3px; }
.picked .fx { background: #9e9e9e; color: #303030; }
.fx-foot { flex: 1; display: flex; justify-content: flex-end; padding: 4px 10px; border-top: 2px solid #0c0c0c; }
.drag-arrow { position: absolute; left: 1313px; top: 239px; pointer-events: none; }

.timeline { display: grid; grid-template-columns: 771px minmax(0, 1fr) 10px; margin-top: 6px; padding-left: 2px; height: 161px; background: var(--bg); }
.layers { min-width: 0; padding-right: 1px; background: linear-gradient(#0c0c0c, #0c0c0c) right bottom / 1px 113px no-repeat; }
.tl-tab { display: flex; align-items: center; gap: 15px; height: 42px; padding-left: 15px; color: #b4b4b4; }
.tl-controls { display: flex; align-items: center; height: 49px; color: var(--icon); padding-bottom: 2px; }
.clock { width: 130px; text-align: center; color: #33a0f5; margin-left: 6px; }
.clock b { display: block; font-size: 21px; line-height: 24px; font-weight: 700; }
.clock span { display: block; font-size: 14px; line-height: 20px; color: #17659f; }
.tl-search { width: 383px; margin: 0 15px 0 8px; }
.tl-controls button { width: 38px; }
.tl-controls button:first-of-type { width: 42px; margin-right: 8px; }
.tl-controls button:last-of-type { margin-left: 10px; }
.tl-head, .tl-row { display: flex; align-items: center; color: var(--icon); }
.tl-head { height: 30px; border: solid #0c0c0c; border-width: 2px 0; font-size: 13px; padding-left: 7px; }
.tl-head > span, .tl-row > span { flex: none; }
.w18 { display: flex; align-items: center; justify-content: center; width: 19px; height: 20px; margin-right: 3px; }
.h-tag { display: flex; width: 46px; height: 16px; align-items: center; justify-content: flex-end; padding-right: 6px; margin-left: 2px; border-left: 2px solid #111; }
.h-num, .h-name, .h-parent { color: var(--text); line-height: 16px; border-left: 2px solid #111; padding-left: 7px; }
.h-num { width: 49px; }
.h-name { width: 188px; }
.h-parent { width: 172px; border-right: 2px solid #111; }
.switches { display: flex; gap: 2px; width: 198px; padding-left: 6px; }
.tl-head .switches { border-left: 2px solid #111; padding-left: 5px; }
.switches > span { display: flex; align-items: center; justify-content: center; width: 20px; height: 20px; }
.fxi { font: italic 21px/20px "Liberation Serif", serif; }
.tl-row { height: 23px; padding-left: 7px; background: #464646; border-bottom: 1px solid #333; }
.cell { background: #323232; }
.r-twirl { width: 32px; padding-left: 12px; }
.label-red { width: 18px; height: 18px; margin-left: -4px; background: #b33838; }
.r-num { width: 55px; padding-left: 13px; font-weight: 700; color: var(--text); }
.solid { width: 20px; height: 20px; background: #fff; border: 1px solid #111; }
.r-name { width: 161px; height: 23px; margin-left: 3px; padding-left: 5px; background: #9e9e9e; color: #303030; font-weight: 700; line-height: 22px; }
.whip { width: 34px; padding-left: 6px; }
.parent { width: 130px; height: 22px; background: #1d1d1d; }

.time { position: relative; display: flex; flex-direction: column; padding-top: 47px; overflow: hidden; }
.navigator, .workarea { display: flex; gap: 2px; border: solid #0c0c0c; border-width: 2px 0; }
.navigator { height: 17px; }
.workarea { height: 26px; border-width: 2px 0 1px; padding-left: 1px; }
.span { flex: 1; background: #666; }
.workarea .span { background: #606060; }
.cap { width: 9px; background: var(--blue); }
.cap.left { border-radius: 9px 0 0 9px; }
.cap.right { border-radius: 0 9px 9px 0; }
.workarea .left { border-radius: 5px 0 0 5px; width: 8px; }
.workarea .right { border-radius: 0 5px 5px 0; }
.ruler { display: flex; justify-content: space-between; height: 26px; padding: 0 16px 0 11px; font-size: 14px; line-height: 18px; }
.ruler span { width: 0; display: flex; flex-direction: column; align-items: center; white-space: nowrap; }
.ruler span::after { content: ""; flex: none; width: 1px; height: 8px; background: #999; }
.cached { height: 5px; margin: 0 10px 0 11px; background: #12c51c; border-bottom: 1px solid #062; }
.clip { height: 24px; margin: 0 10px 0 11px; background: linear-gradient(#a84b4c, #8f4346); border-top: 2px solid #b67474; border-bottom: 1px solid #333; }
.empty { flex: 1; margin: 0 10px 0 11px; background: #333; }
.playhead { position: absolute; left: 2px; top: 69px; bottom: 0; display: flex; flex-direction: column; align-items: center; }
.playhead i { flex: 1; width: 2px; background: #2d7bc8; }
.edge { border-left: 1px solid #111; background: #1f1f1f; padding-top: 98px; }
```
